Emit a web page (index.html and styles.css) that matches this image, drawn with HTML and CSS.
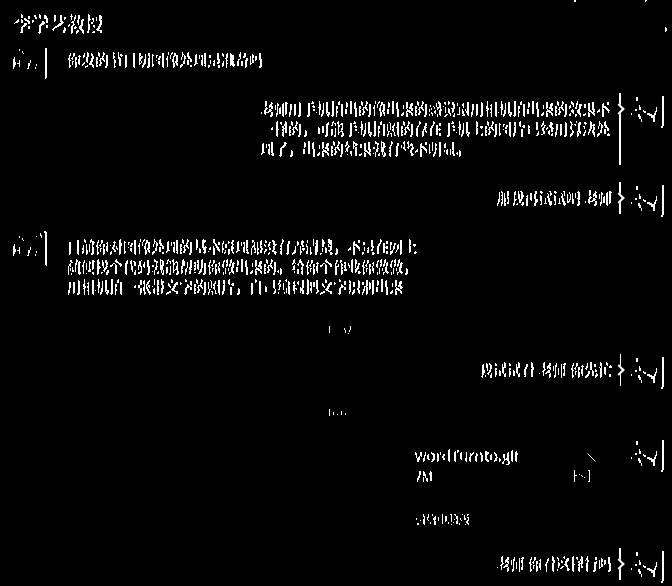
FILE: index.html
```html
<!DOCTYPE html>
<html lang="zh-CN">
<head>
<meta charset="utf-8">
<meta name="viewport" content="width=device-width, initial-scale=1">
<title>李学艺教授</title>
<link rel="stylesheet" href="styles.css">
</head>
<body>
<svg class="defs" aria-hidden="true">
  <filter id="edge" x="0" y="0" width="100%" height="100%" color-interpolation-filters="sRGB">
    <feConvolveMatrix order="3" kernelMatrix="-1 0 1 -2 0 2 -1 0 1" divisor="4" preserveAlpha="true"/>
    <feComponentTransfer>
      <feFuncR type="discrete" tableValues="0 1 1 1 1 1"/>
      <feFuncG type="discrete" tableValues="0 1 1 1 1 1"/>
      <feFuncB type="discrete" tableValues="0 1 1 1 1 1"/>
    </feComponentTransfer>
  </filter>
  <symbol id="me" viewBox="0 0 35 35">
    <path d="M6 4h2v4h-2zM9 12h1v2h1v3h-2zM5 16h2v2h-2zM1 20h1v2h-1zM8 21h2v2h1v3h-2v-2h-1zM11 26h1v3h-1zM13 17h1v1h2v2h-2v-1h-1zM17 20h3v1h2v1h2v-2h1v-2h1v-4h1v5h-1v3h-1v7h-2v-4h-2v-2h-2v-1h-2z"/>
    <path d="M32 3h2v30h-1v2h-2v-2h1z"/>
  </symbol>
  <symbol id="teacher" viewBox="0 0 35 35">
    <path d="M7 5h1v2h-1zM10 7h1v2h1v1h-1v-1h-1zM1 15h1v-2h1v5h1v3h-1v2h-1v2h-1zM7 16h1v7h-1v-3h-2v-1h2zM16 19h2v3h-1v3h-2v-1h1zM18 16h1v3h-1zM24 20h1v2h-1v3h-1v-2h1z"/>
  </symbol>
</svg>

<header class="header">
  <h1 class="title ink">李学艺教授</h1>
  <svg class="window-marks" viewBox="0 0 98 34" aria-hidden="true"><path d="M2 0h2v2h-2zM73 0h2v1h-1v1h-1zM93 27h1v1h1v3h-1v1h-1z"/></svg>
</header>

<main class="chat">
  <article class="row">
    <svg class="avatar" viewBox="0 0 35 35" aria-hidden="true"><use href="#teacher"/><path d="M33 4h2v30h-1v1h-1z"/></svg>
    <p class="bubble ink">你发的节目切图像处理是准备吗</p>
  </article>

  <article class="row mine">
    <svg class="avatar" aria-hidden="true"><use href="#me"/></svg>
    <div class="sent"><p class="bubble ink">老师用手机拍出的像出来的感觉跟用相机拍出来的效果不一样的，可能手机拍照的存在手机上的图片已经用算法处理了，出来的结果就有些不明显。</p></div>
  </article>

  <article class="row mine">
    <svg class="avatar" aria-hidden="true"><use href="#me"/></svg>
    <div class="sent"><p class="bubble ink">那我再试试吧 老师</p></div>
  </article>

  <article class="row">
    <svg class="avatar" viewBox="0 0 35 35" aria-hidden="true"><use href="#teacher"/><path d="M24 5h1v1h-1zM28 2h1v2h1v3h-1v-2h-1zM32 0h2v1h1v34h-1v-1h-1v-32h-1z"/></svg>
    <p class="bubble ink">目前你对图像处理的基本原理都没有弄清楚，不是在网上随便找个代码就能帮助你做出来的。给你个作业你做做，用相机拍一张带文字的照片，自己编程把文字识别出来</p>
  </article>

  <time class="time ink">15:37</time>

  <article class="row mine">
    <svg class="avatar" aria-hidden="true"><use href="#me"/></svg>
    <div class="sent"><p class="bubble ink">我试试看 老师 你先忙</p></div>
  </article>

  <time class="time ink">16:05</time>

  <article class="row mine">
    <svg class="avatar" aria-hidden="true"><use href="#me"/></svg>
    <section class="file">
      <div class="file-main">
        <div>
          <p class="file-name ink">wordTurnto.gif</p>
          <p class="file-size ink">7M</p>
        </div>
        <svg class="file-icon" viewBox="0 0 27 32" aria-hidden="true"><path d="M13.500 .5l8 8" class="fold"/><path d="M0 17h1v5h2v1h-2v6h-1zM5 21h1v1h-1zM7 22h1v1h1v1h-1v-1h-1zM10 24h1v1h-1zM14 17h2v12h-2v-1h1v-10h-1z"/></svg>
      </div>
      <p class="file-source ink">微信电脑版</p>
    </section>
  </article>

  <article class="row mine">
    <svg class="avatar" aria-hidden="true"><use href="#me"/></svg>
    <div class="sent"><p class="bubble ink">老师 你看这样行吗</p></div>
  </article>
</main>
</body>
</html>
```
FILE: styles.css
```css
* {
  box-sizing: border-box;
}

body {
  margin: 0;
  background: #000;
  color: #fff;
  font: 14px/20px "Open Sans", "Noto Sans CJK SC", sans-serif;
}

h1,
p {
  margin: 0;
}

svg {
  display: block;
  flex: none;
  fill: #fff;
}

.defs {
  position: absolute;
  width: 0;
  height: 0;
}

.ink {
  background: #000;
  filter: url(#edge);
}

.header {
  display: flex;
  justify-content: space-between;
  height: 44px;
  padding-left: 12px;
}

.title {
  padding-top: 12px;
  font-size: 18px;
  font-weight: 500;
  line-height: 24px;
}

.window-marks {
  width: 98px;
  height: 34px;
  margin-right: 2px;
}

.chat {
  display: flex;
  flex-direction: column;
  gap: 14px;
  padding: 0 7px 0 12px;
}

.row {
  display: flex;
  align-items: flex-start;
  gap: 11px;
}

.mine {
  flex-direction: row-reverse;
  gap: 9px;
}

.avatar {
  width: 35px;
  height: 35px;
}

.bubble {
  max-width: 368px;
  margin-bottom: 3px;
  padding: 6px 8px;
  font-weight: 500;
}

.sent {
  position: relative;
  margin-bottom: 3px;
  border-right: 2px solid #fff;
}

.sent .bubble {
  margin-bottom: 0;
}

.sent::after {
  content: "";
  position: absolute;
  top: 12px;
  right: -4px;
  width: 6px;
  height: 6px;
  border: solid #fff;
  border-width: 2px 2px 0 0;
  background: #000;
  transform: rotate(45deg);
}

.time {
  align-self: center;
  color: #555;
  font-size: 10px;
}

.file {
  display: flex;
  flex-direction: column;
  justify-content: space-between;
  width: 207px;
  height: 97px;
  padding: 8px 10px 4px 0;
}

.file-main {
  display: flex;
  justify-content: space-between;
}

.file-name {
  font-size: 15px;
  font-weight: 500;
  line-height: 20px;
}

.file-size {
  font-size: 12px;
  line-height: 24px;
}

.file-icon {
  width: 27px;
  height: 32px;
  margin: 8px 10px 0 0;
}

.fold {
  fill: none;
  stroke: #fff;
}

.file-source {
  align-self: flex-start;
  color: #aaa;
  font-size: 11px;
}
```
